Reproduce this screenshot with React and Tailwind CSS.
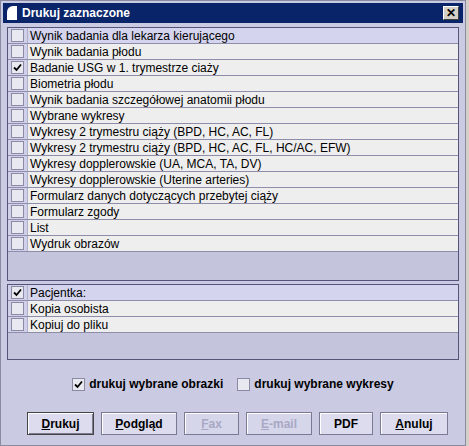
const F = { fontFamily: '"Liberation Sans", Arial, sans-serif' };

function Box({ checked }) {
  return (
    <div className="w-[13px] h-[13px] bg-[#e8e8f0] border border-[#8a8aa4] flex items-center justify-center shrink-0">
      {checked && (
        <svg width="9" height="9" viewBox="0 0 9 9"><path d="M1 4.5 L3.5 7 L8 1.5" stroke="#000" strokeWidth="1.8" fill="none" /></svg>
      )}
    </div>
  );
}

function Row({ label, checked, hl }) {
  return (
    <div className={"flex h-[16px] border-b border-[#8e8eab] " + (hl ? "bg-[#d4d4ee]" : "bg-[#eeeeee]")}>
      <div className="w-[20px] flex items-center justify-center bg-[#d0d0ea] border-r border-[#b0b0c8]"><Box checked={checked} /></div>
      <div className="pl-[2px] text-[12px] leading-[16px] text-black">{label}</div>
    </div>
  );
}

const items = [
  ["Wynik badania dla lekarza kierującego", false, true],
  ["Wynik badania płodu"],
  ["Badanie USG w 1. trymestrze ciaży", true],
  ["Biometria płodu"],
  ["Wynik badania szczegółowej anatomii płodu"],
  ["Wybrane wykresy"],
  ["Wykresy 2 trymestru ciąży (BPD, HC, AC, FL)"],
  ["Wykresy 2 trymestru ciąży (BPD, HC, AC, FL, HC/AC, EFW)"],
  ["Wykresy dopplerowskie (UA, MCA, TA, DV)"],
  ["Wykresy dopplerowskie (Uterine arteries)"],
  ["Formularz danych dotyczących przebytej ciąży"],
  ["Formularz zgody"],
  ["List"],
  ["Wydruk obrazów"],
];

function Btn({ children, w, dis, def }) {
  return (
    <div className={"h-[23px] flex items-center justify-center text-[12px] font-bold border " + (def ? "border-[#444] shadow-[inset_1px_1px_0_#fff,inset_-1px_-1px_0_#7a7a90] " : "border-[#7a7a96] shadow-[inset_1px_1px_0_#fff] ") + (dis ? "text-[#a8a8c4] bg-[#d6d6ea]" : "text-black bg-[#dcdcee]")} style={{ width: w }}>
      {children}
    </div>
  );
}

export default function App() {
  return (
    <div style={F} className="w-[469px] h-[446px] bg-[#d4d0c8] relative overflow-hidden">
      <div className="absolute left-0 top-0 w-[466px] h-[446px] bg-[#cacae2] border border-[#8a8aa0] flex flex-col">
        <div className="h-[20px] mx-[2px] mt-[2px] bg-[#0a246a] flex items-center px-[4px]">
          <div className="w-[10px] h-[14px] bg-white rounded-tl-[6px] mr-[5px]" />
          <div className="text-white font-bold text-[12px] flex-1">Drukuj zaznaczone</div>
          <div className="w-[16px] h-[14px] bg-[#d4d0c8] border border-[#fff] border-r-[#404040] border-b-[#404040] flex items-center justify-center text-[12px] font-bold leading-none">✕</div>
        </div>
        <div className="mx-[6px] mt-[4px] h-[254px] border border-[#55557a] bg-[#c4c4dc]">
          {items.map(([l, c, h], i) => <Row key={i} label={l} checked={c} hl={h} />)}
        </div>
        <div className="mx-[6px] mt-[3px] h-[76px] border border-[#55557a] bg-[#c4c4dc]">
          <Row label="Pacjentka:" checked hl />
          <Row label="Kopia osobista" />
          <Row label="Kopiuj do pliku" />
        </div>
        <div className="flex justify-center gap-[14px] mt-[15px] text-[12px] font-bold">
          <div className="flex items-center gap-[4px]"><Box checked />drukuj wybrane obrazki</div>
          <div className="flex items-center gap-[4px]"><Box />drukuj wybrane wykresy</div>
        </div>
        <div className="flex pl-[26px] gap-[7px] mt-[19px]">
          <Btn w={67} def><u>D</u>rukuj</Btn>
          <Btn w={76}><u>P</u>odgląd</Btn>
          <Btn w={55} dis><u>F</u>ax</Btn>
          <Btn w={66} dis><u>E</u>-mail</Btn>
          <Btn w={54}>PDF</Btn>
          <Btn w={68}><u>A</u>nuluj</Btn>
        </div>
      </div>
    </div>
  );
}
